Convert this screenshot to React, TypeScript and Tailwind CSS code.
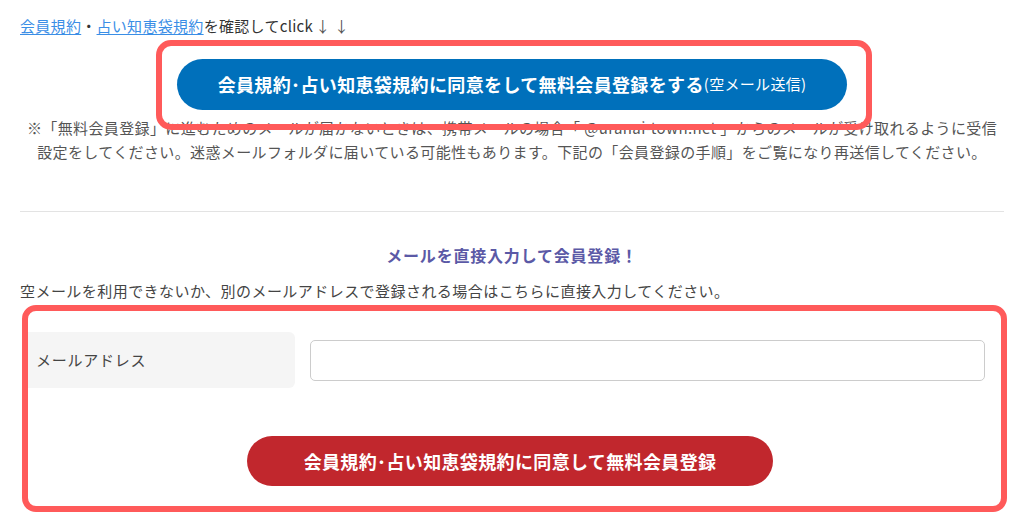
import React from "react";

export default function App() {
  return (
    <div
      className="w-[1024px] h-[524px] overflow-hidden bg-white px-5 text-[#444]"
      style={{ fontFamily: '"Noto Sans CJK JP", "Noto Sans", sans-serif' }}
    >
      <p className="pt-[14px] text-[15px] leading-6 tracking-[0.02em] text-[#333]">
        <a href="#" className="text-[#3a8ee6] underline underline-offset-2">会員規約</a>
        <span>・</span>
        <a href="#" className="text-[#3a8ee6] underline underline-offset-2">占い知恵袋規約</a>
        を確認してclick
        <span className="ml-[2px] text-[#555]">↓ ↓</span>
      </p>

      <div className="mt-[21px] flex justify-center">
        <div className="relative">
          <button className="flex h-[51px] w-[670px] items-center justify-center rounded-full bg-[#0070bb] text-white">
            <span className="text-[18px] font-bold tracking-[0.02em]">会員規約･占い知恵袋規約に同意をして無料会員登録をする</span>
            <span className="text-[15px] tracking-[0.02em]">(空メール送信)</span>
          </button>
          <div className="pointer-events-none absolute -left-[21px] -right-[25px] -top-[19px] -bottom-[20px] z-10 rounded-[15px] border-[6px] border-[#ff5a5a]" />
        </div>
      </div>

      <div className="mt-[6px] text-center text-[15px] leading-6 tracking-[0.025em] text-[#555]">
        <p className="whitespace-nowrap">
          ※「無料会員登録」に進むためのメールが届かないときは、携帯メールの場合「 @uranai-town.net 」からのメールが受け取れるように受信
        </p>
        <p className="whitespace-nowrap">
          設定をしてください。迷惑メールフォルダに届いている可能性もあります。下記の「会員登録の手順」をご覧になり再送信してください。
        </p>
      </div>

      <hr className="mt-[47px] border-0 border-t border-[#e3e3e3]" />

      <h2 className="mt-[31px] text-center text-[16px] font-bold leading-6 tracking-[0.05em] text-[#5b59a6]">
        メールを直接入力して会員登録！
      </h2>

      <p className="mt-[12px] text-[15px] leading-6 tracking-[0.03em] text-[#444]">
        空メールを利用できないか、別のメールアドレスで登録される場合はこちらに直接入力してください。
      </p>

      <div className="-mr-[3px] ml-[2px] mt-[2px] rounded-[14px] border-[6px] border-[#ff5a5a] pb-[20px] pr-[16px] pt-[21px]">
        <div className="flex items-center gap-[15px]">
          <div className="flex h-[56px] w-[267px] items-center rounded-r-[6px] bg-[#f5f5f5] pl-[8px] text-[15px] tracking-[0.05em] text-[#444]">
            メールアドレス
          </div>
          <input
            type="text"
            className="h-[41px] flex-1 rounded-[5px] border border-[#cccccc] bg-white px-2 outline-none"
          />
        </div>
        <div className="mt-[48px] flex justify-center pl-[7px]">
          <button className="flex h-[50px] w-[526px] items-center justify-center rounded-full bg-[#c1272d] text-[18px] font-bold tracking-[0.02em] text-white">
            会員規約･占い知恵袋規約に同意して無料会員登録
          </button>
        </div>
      </div>
    </div>
  );
}
